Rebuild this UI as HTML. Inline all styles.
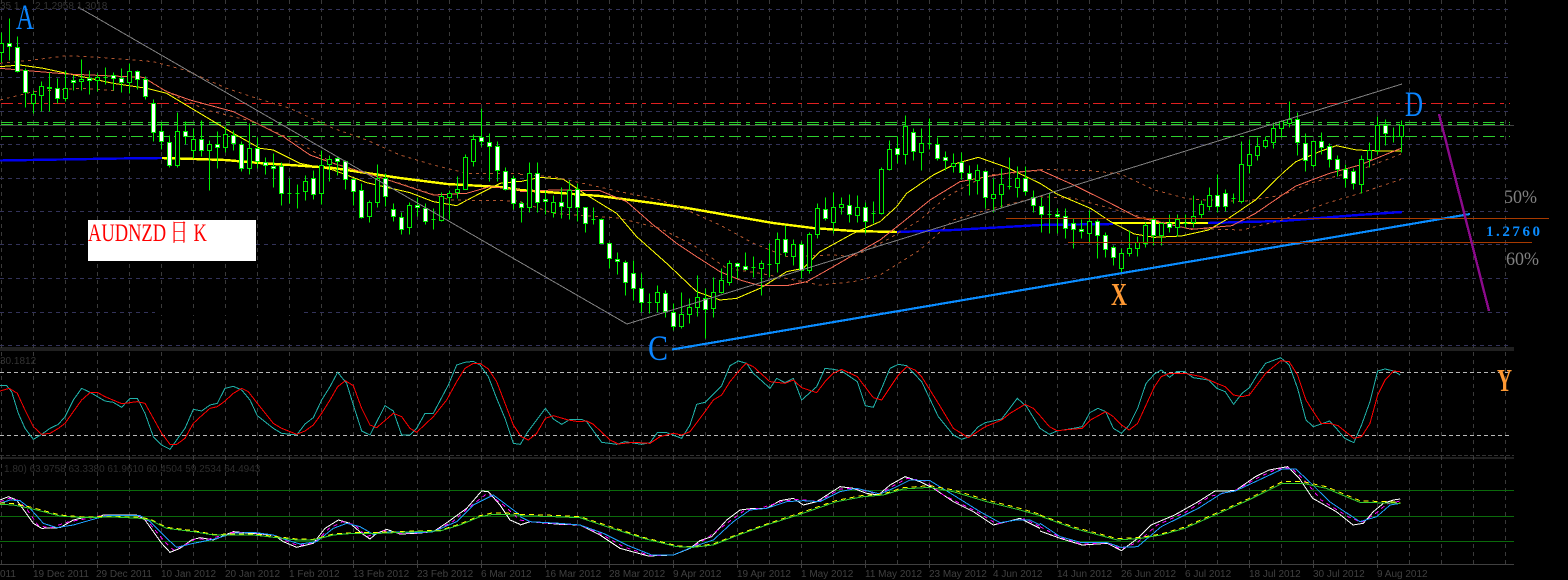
<!DOCTYPE html>
<html><head><meta charset="utf-8"><style>
html,body{margin:0;padding:0;background:#000;width:1568px;height:580px;overflow:hidden}
svg{display:block;font-family:"Liberation Sans",sans-serif}
polyline,path.c{vector-effect:non-scaling-stroke;fill:none}
.y{stroke:#ff0;stroke-width:1}
.s{stroke:#fa6a55;stroke-width:1}
.b{stroke:#b0552e;stroke-width:1;stroke-dasharray:3 4}
.cy{stroke:#20b2aa;stroke-width:1}
.rd{stroke:#f00;stroke-width:1}
.wh{stroke:#fff;stroke-width:1}
.sk{stroke:#1ea0ff;stroke-width:1}
.mg{stroke:#f0f;stroke-width:1;stroke-dasharray:4 4}
.gn{stroke:#32cd32;stroke-width:1}
.yd{stroke:#ff0;stroke-width:1;stroke-dasharray:5 4}
.d{font-size:10px;fill:#404040}
.sf{font-family:"Liberation Serif","Noto Serif CJK SC",serif}
</style></head><body>
<svg width="1568" height="580" viewBox="0 0 1568 580" xmlns="http://www.w3.org/2000/svg">
<rect width="1568" height="580" fill="#000"/>
<g shape-rendering="crispEdges">
<path fill="none" stroke="#3a3a3a" stroke-dasharray="4 4" d="M1.5 0V564M33.5 0V564M65.5 0V564M97.5 0V564M129.5 0V564M161.5 0V564M193.5 0V564M225.5 0V564M257.5 0V564M289.5 0V564M321.5 0V564M353.5 0V564M385.5 0V564M417.5 0V564M449.5 0V564M481.5 0V564M513.5 0V564M545.5 0V564M577.5 0V564M609.5 0V564M633.5 0V564M641.5 0V564M673.5 0V564M705.5 0V564M737.5 0V564M769.5 0V564M801.5 0V564M833.5 0V564M865.5 0V564M897.5 0V564M929.5 0V564M961.5 0V564M985.5 0V564M993.5 0V564M1025.5 0V564M1057.5 0V564M1089.5 0V564M1121.5 0V564M1153.5 0V564M1185.5 0V564M1217.5 0V564M1249.5 0V564M1281.5 0V564M1313.5 0V564M1345.5 0V564M1377.5 0V564M1409.5 0V564M1441.5 0V564M1473.5 0V564M1505.5 0V564"/>
<path fill="none" stroke="#33335a" stroke-dasharray="4 4" d="M0 9.5H1512M0 43.5H1512M0 77.5H1512M0 111.5H1512M0 144.5H1512M0 178.5H1512M0 211.5H1512M0 244.5H1512M0 278.5H1512M0 312.5H1512M0 345.5H1512"/>
<rect x="155" y="310" width="147" height="5" fill="#000"/>
<path fill="none" stroke="#404040" d="M0 125.5H1514M0 350H1514M0 348H1514M0 458H1514M0 564.5H1514"/>
<path fill="none" stroke="#333" stroke-dasharray="4 2" d="M0 455.5H1514"/>
<path fill="none" stroke="#e02020" stroke-dasharray="12 5 4 5" d="M1 103.5H1510"/>
<path fill="none" stroke="#2ed02e" stroke-dasharray="12 5 4 5" d="M1 122.5H1510M1 124.5H1510M1 136.5H1510"/>
<path fill="none" stroke="#b8b8b8" stroke-dasharray="4 3" d="M0 372.5H1511M0 435.5H1511"/>
<path fill="none" stroke="#0b6a0b" d="M0 490.5H1514M0 516.5H1514M0 541.5H1514"/>
<path fill="none" stroke="#404040" d="M33.5 564V568M97.5 564V568M161.5 564V568M225.5 564V568M289.5 564V568M353.5 564V568M417.5 564V568M481.5 564V568M545.5 564V568M609.5 564V568M673.5 564V568M737.5 564V568M801.5 564V568M865.5 564V568M929.5 564V568M993.5 564V568M1057.5 564V568M1121.5 564V568M1185.5 564V568M1249.5 564V568M1313.5 564V568M1377.5 564V568"/>
</g>
<!-- thick MA -->
<g fill="none" stroke-width="2.4" shape-rendering="crispEdges">
<path stroke="#0000f0" d="M0 160.5L60 159.5L120 158.5L162 158"/>
<path stroke="#ff0" d="M162 158L195 159L225 160L260 163L290 165L333 168L400 178L447 184L500 187L520 190L600 196L653 203L687 208L727 215L773 223L813 228L853 231L897 232"/>
<path stroke="#0000f0" d="M897 232L953 230L1040 225L1113 224"/>
<path stroke="#ff0" d="M1113 223H1208"/>
<path stroke="#0000f0" d="M1208 223L1282 221L1358 215L1402 212"/>
</g>
<g shape-rendering="crispEdges">
<g transform="scale(.33333)">
<polyline class="y" points="0,200 60,195 130,205 200,220 340,250 440,265 500,280 600,340 700,400 780,445 820,450 900,490 1000,510 1100,548 1230,578 1300,605 1370,617 1440,580 1500,550 1560,544"/>
<polyline class="s" points="0,205 60,210 200,222 430,232 500,275 570,300 700,335 780,375 850,410 930,465 1000,490 1100,520 1180,545 1300,585 1400,580 1470,560 1560,570"/>
<polyline class="b" points="0,190 100,180 200,167 300,172 460,185 560,212 680,265 770,295 870,325 1000,385 1100,420 1200,465 1300,495 1400,520 1560,520"/>
<polyline class="b" points="0,300 100,275 240,265 350,272"/>
<polyline class="b" points="440,240 520,285 620,330 760,365 900,430 1000,490 1200,550 1350,600 1560,603"/>
</g>
<g transform="translate(520 80) scale(.33333)">
<polyline class="y" points="0,305 60,292 130,298 200,345 290,400 350,470 440,550 530,635 600,660 650,655 720,625 800,575 850,565 900,515 1000,460 1080,425 1130,380 1160,340 1240,285 1310,250 1375,232 1460,262 1560,310"/>
<polyline class="s" points="0,335 100,330 240,332 320,365 400,435 470,490 530,530 600,575 660,600 720,617 800,617 860,605 940,560 1000,525 1080,480 1150,425 1230,360 1320,305 1400,290 1480,277 1560,270"/>
<polyline class="b" points="0,283 100,290 300,335 420,360 500,390 600,435 700,490 800,530 940,525 1000,530 1100,480 1200,420 1280,350 1400,285 1560,272"/>
<polyline class="b" points="0,365 100,400 300,415 420,445 520,495 620,565 720,580 900,615 1000,605 1080,585 1200,510 1300,420 1400,390 1560,350"/>
</g>
<g transform="translate(1040 80) scale(.3367 .33333)">
<polyline class="y" points="0,310 50,342 150,385 210,425 280,462 340,472 420,468 500,450 560,415 640,360 720,280 760,245 830,215 880,197 940,210 1010,213 1072,213"/>
<polyline class="s" points="0,270 100,315 200,365 290,412 350,425 450,448 570,437 640,400 720,345 760,318 860,280 950,255 1072,205"/>
<polyline class="b" points="0,268 150,272 240,282 340,330 440,357 600,365 720,345 800,310 950,270 1072,222"/>
<polyline class="b" points="0,350 100,355 300,410 440,445 600,450 720,420 850,370 950,340 1072,298"/>
</g>
</g>
<!-- candles -->
<g transform="translate(.5 .5)" shape-rendering="crispEdges">
<path fill="none" stroke="#00f000" d="M1 32V62M9 18V60M17 36V72M25 68V107M33 90V113M41 81V111M49 72V111M57 78V103M65 70V101M73 75V90M81 59V90M89 70V94M97 73V91M105 67V84M113 72V90M121 68V92M129 63V93M137 70V89M145 76V99M153 99V141M161 122V149M169 135V167M177 112V167M185 121V144M193 128V158M201 120V156M209 140V190M217 131V168M225 126V152M233 130V150M241 141V171M249 123V174M257 137V168M265 157V174M273 153V187M281 162V205M289 178V203M297 184V208M305 175V200M313 170V199M321 150V204M329 155V181M337 156V175M345 160V189M353 178V205M361 183V218M369 200V222M377 164V207M385 173V206M393 203V221M401 212V234M409 202V234M417 197V216M425 203V224M433 208V229M441 192V221M449 190V219M457 176V198M465 154V186M473 134V166M481 108V146M489 133V181M497 141V181M505 167V190M513 175V209M521 201V222M529 162V212M537 162V212M545 190V214M553 195V217M561 187V218M569 180V219M577 183V221M585 207V232M593 207V224M601 218V243M609 242V268M617 252V274M625 260V295M633 260V300M641 273V312M649 293V313M657 285V312M665 290V317M673 303V330M681 292V328M689 298V323M697 275V316M705 288V338M713 277V317M721 268V293M729 260V285M737 262V278M745 252V270M753 256V277M761 260V295M769 243V277M777 232V272M785 225V256M793 239V265M801 241V278M809 232V273M817 203V238M825 197V220M833 192V233M841 197V214M849 194V222M857 195V222M865 202V233M873 201V223M881 167V214M889 140V170M897 136V163M905 115V164M913 128V160M921 128V170M929 118V149M937 137V160M945 151V170M953 153V172M961 152V179M969 165V195M977 164V194M985 170V208M993 178V212M1001 168V207M1009 157V189M1017 166V197M1025 166V195M1033 190V212M1041 197V232M1049 193V233M1057 208V233M1065 208V238M1073 218V248M1081 219V238M1089 210V243M1097 219V258M1105 232V257M1113 245V265M1121 248V273M1129 230V256M1137 236V256M1145 222V247M1153 216V245M1161 222V245M1169 214V232M1177 214V236M1185 214V227M1193 195V227M1201 200V218M1209 187V210M1217 174V212M1225 189V211M1233 193V203M1241 141V203M1249 139V173M1257 137V160M1265 136V148M1273 122V148M1281 120V137M1289 101V127M1297 112V155M1305 133V171M1313 140V167M1321 132V154M1329 143V167M1337 155V176M1345 164V187M1353 168V189M1361 155V193M1369 142V167M1377 116V154M1385 119V145M1393 127V142M1401 120V152"/>
<path fill="#000" stroke="#00f000" d="M-1 43h4V52h-4zM31 94h4V103h-4zM39 86h4V95h-4zM63 88h4V98h-4zM79 79h4V81h-4zM95 77h4V80h-4zM127 71h4V82h-4zM175 131h4V165h-4zM191 139h4V150h-4zM207 144h4V150h-4zM223 134h4V147h-4zM247 148h4V168h-4zM303 181h4V191h-4zM319 165h4V193h-4zM327 159h4V164h-4zM367 202h4V216h-4zM375 178h4V202h-4zM407 205h4V227h-4zM439 196h4V220h-4zM447 193h4V197h-4zM455 189h4V192h-4zM463 157h4V189h-4zM471 139h4V161h-4zM527 173h4V207h-4zM551 202h4V212h-4zM567 190h4V207h-4zM655 292h4V302h-4zM679 314h4V326h-4zM687 307h4V314h-4zM695 297h4V307h-4zM711 292h4V308h-4zM719 280h4V292h-4zM727 263h4V282h-4zM759 263h4V268h-4zM775 239h4V263h-4zM791 244h4V256h-4zM807 234h4V270h-4zM815 208h4V234h-4zM831 207h4V222h-4zM839 204h4V207h-4zM855 207h4V215h-4zM879 169h4V213h-4zM887 149h4V169h-4zM903 126h4V154h-4zM919 143h4V152h-4zM951 163h4V166h-4zM975 170h4V180h-4zM991 194h4V198h-4zM999 184h4V194h-4zM1015 178h4V187h-4zM1087 221h4V233h-4zM1119 253h4V268h-4zM1127 248h4V253h-4zM1135 242h4V248h-4zM1143 225h4V243h-4zM1159 223h4V235h-4zM1175 219h4V227h-4zM1191 216h4V222h-4zM1199 204h4V214h-4zM1207 195h4V206h-4zM1239 164h4V201h-4zM1247 154h4V165h-4zM1255 146h4V155h-4zM1263 140h4V146h-4zM1271 128h4V142h-4zM1279 121h4V128h-4zM1287 119h4V123h-4zM1311 141h4V165h-4zM1359 159h4V184h-4zM1367 150h4V159h-4zM1375 125h4V150h-4zM1399 125h4V136h-4z"/>
<path fill="#fff" stroke="#00f000" d="M7 43h4V46h-4zM15 47h4V71h-4zM23 70h4V92h-4zM47 87h4V88h-4zM55 88h4V98h-4zM71 80h4V82h-4zM87 78h4V80h-4zM111 75h4V78h-4zM119 78h4V82h-4zM135 71h4V79h-4zM143 79h4V96h-4zM151 103h4V132h-4zM159 131h4V141h-4zM167 142h4V165h-4zM183 131h4V136h-4zM199 139h4V150h-4zM215 144h4V147h-4zM231 135h4V143h-4zM239 144h4V168h-4zM255 148h4V161h-4zM263 162h4V165h-4zM271 166h4V168h-4zM279 166h4V193h-4zM311 178h4V194h-4zM335 158h4V161h-4zM343 161h4V179h-4zM351 179h4V191h-4zM359 190h4V217h-4zM383 178h4V196h-4zM391 209h4V216h-4zM399 217h4V229h-4zM415 205h4V207h-4zM423 208h4V221h-4zM479 137h4V141h-4zM487 142h4V146h-4zM495 146h4V170h-4zM503 171h4V189h-4zM511 178h4V203h-4zM519 203h4V207h-4zM535 173h4V202h-4zM543 199h4V201h-4zM559 202h4V206h-4zM575 189h4V207h-4zM583 207h4V223h-4zM599 219h4V243h-4zM607 243h4V258h-4zM615 259h4V261h-4zM623 262h4V282h-4zM631 273h4V288h-4zM639 288h4V302h-4zM663 293h4V311h-4zM671 312h4V326h-4zM703 298h4V309h-4zM735 263h4V266h-4zM743 266h4V269h-4zM783 239h4V252h-4zM799 244h4V270h-4zM823 209h4V218h-4zM847 205h4V214h-4zM863 207h4V221h-4zM895 148h4V154h-4zM911 132h4V151h-4zM935 144h4V158h-4zM943 157h4V160h-4zM959 162h4V172h-4zM967 173h4V179h-4zM983 171h4V197h-4zM1023 178h4V191h-4zM1031 197h4V205h-4zM1039 206h4V214h-4zM1055 214h4V216h-4zM1063 216h4V228h-4zM1071 223h4V229h-4zM1079 229h4V231h-4zM1095 221h4V235h-4zM1103 235h4V249h-4zM1111 247h4V257h-4zM1151 219h4V235h-4zM1167 223h4V227h-4zM1215 195h4V206h-4zM1223 193h4V206h-4zM1295 119h4V142h-4zM1303 143h4V160h-4zM1319 141h4V147h-4zM1327 146h4V159h-4zM1335 159h4V169h-4zM1343 169h4V178h-4zM1351 171h4V183h-4zM1383 125h4V133h-4z"/>
<path fill="none" stroke="#00f000" d="M103 77h4M287 193h4M295 193h4M431 219h4M591 219h4M647 302h4M751 267h4M767 264h4M871 213h4M927 143h4M1007 186h4M1047 214h4M1183 223h4M1231 198h4M1391 136h4"/>
</g>
<!-- trend lines -->
<g shape-rendering="crispEdges">
<polyline points="78,7 627,324 1402,84" stroke="#808080" stroke-width="1"/>
<line x1="672" y1="349.5" x2="1470" y2="214" stroke="#0a8cff" stroke-width="2.2"/>
<path fill="none" stroke="#a83a00" d="M1006 218.5H1549M1068 242.5H1532"/>
<line x1="1439" y1="114" x2="1489" y2="311" stroke="#8b0a8b" stroke-width="2.4"/>
</g>
<!-- stochastic -->
<g shape-rendering="crispEdges">
<g transform="translate(0 345) scale(.33333)">
<polyline class="cy" points="0,122 20,122 35,140 55,205 75,250 100,283 125,268 150,250 175,238 195,215 220,165 245,130 270,142 315,168 340,172 365,187 390,160 412,160 435,205 460,275 485,300 510,313 555,250 580,193 605,198 630,180 652,175 675,130 700,124 725,135 750,165 772,212 820,250 845,265 890,270 915,237 940,218 965,165 990,125 1013,82 1040,115 1060,180 1085,258 1110,270 1155,182 1180,198 1205,270 1230,270 1250,250 1275,205 1300,205 1345,120 1370,60 1395,52 1420,49 1440,60 1465,95 1490,160 1515,220 1540,295 1560,298"/>
<polyline class="rd" points="0,138 28,130 52,145 75,195 100,245 125,268 150,265 175,250 195,235 220,200 245,165 270,143 292,142 315,155 365,176 412,170 435,175 460,220 485,265 510,298 530,298 555,280 580,235 605,212 630,190 652,185 675,168 700,145 725,130 745,140 772,175 820,235 845,250 890,268 915,258 940,240 965,205 990,165 1013,125 1036,107 1060,122 1085,190 1110,240 1130,248 1180,205 1205,215 1230,250 1250,262 1300,215 1340,165 1370,110 1395,70 1420,55 1440,55 1465,72 1490,110 1515,175 1540,240 1560,270"/>
<polyline class="wh" points="0,465 25,455 50,465 75,500 100,535 125,550 180,548 220,525 250,518 290,518 310,510 410,510 435,525 485,595 510,622 540,610 575,585 600,578 640,585 700,560 750,565 820,570 850,590 890,607 940,595 975,550 1015,525 1050,535 1085,565 1110,582 1130,565 1160,553 1200,567 1250,565 1300,560 1345,530 1400,490 1445,438 1465,440 1500,480 1530,525 1560,538"/>
<polyline class="mg" points="0,470 28,460 55,466 82,495 115,542 150,549 200,532 270,519 310,511 415,511 442,527 492,588 520,615 560,597 588,581 620,584 700,562 755,563 820,570 855,587 895,602 945,592 988,550 1028,530 1065,540 1100,575 1150,557 1200,565 1250,564 1300,560 1358,530 1410,485 1462,445 1510,480 1560,525"/>
<polyline class="sk" points="0,475 30,465 60,467 90,490 130,535 170,548 220,540 290,520 320,512 420,512 450,530 500,580 530,607 580,595 640,583 700,565 760,562 820,570 860,585 900,597 950,590 1000,550 1040,535 1080,545 1120,568 1170,560 1250,563 1300,560 1370,530 1420,480 1480,450 1520,480 1560,510"/>
<polyline class="yd" points="0,474 40,476 90,486 180,510 250,516 340,514 420,517 450,522 500,547 580,557 640,568 760,567 830,575 890,582 940,583 1000,567 1060,563 1140,562 1250,558 1320,556 1380,537 1440,512 1480,503 1560,506"/>
<polyline class="gn" points="0,478 40,480 90,490 180,513 250,518 340,516 420,520 450,525 500,550 580,560 640,570 760,570 830,578 890,585 940,585 1000,570 1060,565 1140,565 1250,560 1320,558 1380,540 1440,515 1480,508 1560,510"/>
</g>
<g transform="translate(520 345) scale(.33333)">
<polyline class="cy" points="0,300 20,265 50,225 76,190 100,222 125,238 150,223 185,223 200,230 245,292 290,298 315,290 365,298 390,293 412,263 440,263 485,280 510,240 530,178 555,172 605,122 630,62 655,48 680,55 700,85 750,130 770,100 795,113 820,100 845,165 890,125 915,70 940,73 965,78 1012,110 1036,182 1060,187 1085,130 1110,70 1135,58 1160,62 1205,110 1255,215 1300,270 1325,283 1348,275 1375,245 1396,233 1445,222 1492,160 1520,185 1560,250"/>
<polyline class="rd" points="0,273 25,285 50,265 76,220 100,212 145,225 175,230 200,228 220,238 270,285 295,297 340,292 390,295 420,275 460,265 485,270 510,260 555,200 580,165 605,150 630,110 655,80 678,55 700,65 750,110 795,115 820,105 845,128 890,143 915,110 940,85 965,73 1012,95 1060,158 1085,165 1135,90 1160,65 1185,75 1205,95 1255,175 1300,250 1345,278 1396,245 1445,225 1470,205 1515,178 1540,190 1560,212"/>
<polyline class="wh" points="0,540 30,530 120,538 180,540 240,570 300,610 385,633 460,630 510,610 540,587 575,575 620,525 660,495 700,490 740,490 780,467 820,460 850,480 890,470 960,425 1000,430 1040,445 1075,450 1110,420 1155,395 1200,410 1240,430 1300,470 1360,500 1420,540 1460,530 1500,520 1560,550"/>
<polyline class="mg" points="0,525 30,530 120,537 180,540 245,568 310,605 390,632 460,630 515,607 560,580 630,528 675,495 720,490 790,468 835,463 895,470 960,432 1005,430 1078,448 1115,425 1162,400 1215,408 1270,450 1370,500 1430,537 1475,527 1515,522 1560,545"/>
<polyline class="sk" points="0,515 30,530 120,535 180,540 250,565 320,600 395,630 460,630 520,605 580,585 640,530 690,495 740,490 800,470 850,467 900,470 960,440 1010,430 1080,447 1120,430 1170,405 1230,407 1300,450 1380,500 1440,533 1490,525 1530,525 1560,540"/>
<polyline class="yd" points="0,508 100,511 180,515 260,541 370,577 470,602 520,605 580,597 650,569 740,537 840,504 950,466 1030,451 1090,447 1150,428 1230,422 1300,435 1400,465 1500,490 1560,508"/>
<polyline class="gn" points="0,512 100,515 180,518 260,545 370,580 470,605 520,607 580,600 650,572 740,540 840,508 950,470 1030,455 1090,450 1150,432 1230,427 1300,440 1400,470 1500,495 1560,512"/>
</g>
<g transform="translate(1040 345) scale(.3367 .33333)">
<polyline class="cy" points="0,250 28,268 50,258 100,250 125,245 148,203 172,190 195,200 218,250 242,265 265,240 290,190 315,115 340,87 360,75 385,97 405,80 430,80 455,98 500,105 525,130 550,140 575,178 600,145 622,128 645,90 670,55 715,38 740,60 765,130 790,225 812,245 860,228 880,250 905,280 932,293 955,240 980,170 1003,78 1025,72 1050,78 1070,90"/>
<polyline class="rd" points="0,212 28,245 50,257 125,250 150,225 195,200 218,215 242,240 265,255 290,235 315,180 340,125 360,95 385,85 430,85 480,95 525,115 550,125 575,150 600,155 622,150 670,85 715,47 740,50 765,90 790,165 815,205 835,235 860,235 885,242 932,280 955,275 980,235 1003,150 1025,105 1050,78 1070,80"/>
<polyline class="wh" points="0,558 60,580 125,600 200,595 242,617 290,580 330,540 400,510 470,470 520,438 580,437 640,395 680,375 735,365 770,400 810,460 880,500 930,540 960,535 990,500 1020,475 1050,465 1070,462"/>
<polyline class="mg" points="0,545 60,577 122,597 200,594 241,612 290,592 345,542 435,500 505,454 580,437 640,402 700,373 745,368 785,405 835,465 915,515 955,532 995,507 1030,477 1070,468"/>
<polyline class="sk" points="0,535 60,575 120,592 200,593 240,607 290,605 360,545 470,490 540,445 580,438 640,410 720,372 760,372 800,410 860,470 950,530 1000,515 1040,480 1070,475"/>
<polyline class="yd" points="0,510 100,546 230,581 300,577 360,567 430,546 520,506 620,461 720,410 780,410 850,425 950,467 1070,472"/>
<polyline class="gn" points="0,513 100,550 230,585 300,580 360,570 430,550 520,510 620,465 720,415 780,415 850,430 950,472 1070,475"/>
</g>
</g>
<!-- white label box -->
<rect x="88" y="220" width="168" height="41" fill="#fff"/>
<text class="sf" fill="#f00" font-size="25" transform="translate(88 241) scale(.74 1)">AUDNZD<tspan dx="5">日</tspan><tspan dx="7">K</tspan></text>
<!-- letters -->
<g class="sf" font-size="36">
<text x="16" y="29" fill="#0a84ff" textLength="18" lengthAdjust="spacingAndGlyphs">A</text>
<text x="648" y="360" fill="#0a84ff" textLength="20" lengthAdjust="spacingAndGlyphs">C</text>
<text x="1405" y="116" fill="#0a84ff" textLength="18" lengthAdjust="spacingAndGlyphs">D</text>
<text x="1111" y="305" fill="#ff9933" font-size="32" font-weight="bold" textLength="16" lengthAdjust="spacingAndGlyphs">X</text>
<text x="1497" y="391" fill="#ff9933" font-size="32" font-weight="bold" textLength="15" lengthAdjust="spacingAndGlyphs">Y</text>
</g>
<g class="sf">
<text x="1504" y="203" fill="#808080" font-size="19" textLength="33" lengthAdjust="spacingAndGlyphs">50%</text>
<text x="1506" y="265" fill="#808080" font-size="19" textLength="33" lengthAdjust="spacingAndGlyphs">60%</text>
<text x="1486" y="236" fill="#0a8cff" font-size="15" font-weight="bold" textLength="54">1.2760</text>
</g>
<!-- ghost labels -->
<text x="0" y="9" font-size="10" fill="#333">35 1.</text>
<text x="35" y="9" font-size="10" fill="#333">2 1.2958 1.3018</text>
<text x="0" y="364" font-size="10" fill="#333">30.1812</text>
<text x="4" y="472" font-size="10" fill="#2e2e2e">1.80) 63.9758 63.3380 61.9610 60.4504 59.2534 64.4943</text>
<g class="d">
<text x="0" y="577">011</text><text x="33" y="577">19 Dec 2011</text><text x="96" y="577">29 Dec 2011</text><text x="161" y="577">10 Jan 2012</text><text x="225" y="577">20 Jan 2012</text><text x="289" y="577">1 Feb 2012</text><text x="353" y="577">13 Feb 2012</text><text x="417" y="577">23 Feb 2012</text><text x="481" y="577">6 Mar 2012</text><text x="545" y="577">16 Mar 2012</text><text x="609" y="577">28 Mar 2012</text><text x="673" y="577">9 Apr 2012</text><text x="737" y="577">19 Apr 2012</text><text x="801" y="577">1 May 2012</text><text x="865" y="577">11 May 2012</text><text x="929" y="577">23 May 2012</text><text x="993" y="577">4 Jun 2012</text><text x="1057" y="577">14 Jun 2012</text><text x="1121" y="577">26 Jun 2012</text><text x="1185" y="577">6 Jul 2012</text><text x="1249" y="577">18 Jul 2012</text><text x="1313" y="577">30 Jul 2012</text><text x="1377" y="577">9 Aug 2012</text>
</g>
</svg>
</body></html>
